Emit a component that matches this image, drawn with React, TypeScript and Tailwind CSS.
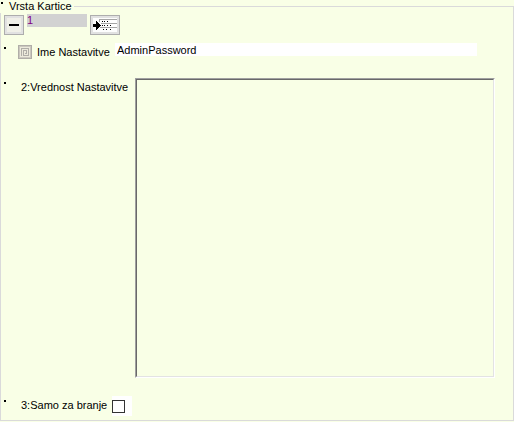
function Bullet() {
  return <span aria-hidden="true" className="h-[2px] w-[2px] shrink-0 bg-black" />;
}

function MinusIcon() {
  return (
    <svg width="14" height="14" viewBox="0 0 14 14" shapeRendering="crispEdges" aria-hidden="true">
      <rect x="2" y="6" width="10" height="2" fill="#000" />
    </svg>
  );
}

function InsertRowIcon() {
  return (
    <svg width="24" height="14" viewBox="0 0 24 14" shapeRendering="crispEdges" aria-hidden="true">
      <rect width="24" height="14" fill="#fdfdfd" />
      <path d="M6 1h18v1H6zM8 5h16v1H8zM7 9h17v1H7zM6 1h1v3H6z" fill="#a5a5a5" />
      <path
        d="M9 3h1v1H9zM11 3h1v1h-1zM14 3h1v1h-1zM9 7h1v1H9zM11 7h1v1h-1zM14 7h1v1h-1zM17 7h1v1h-1zM10 11h1v1h-1zM13 11h1v1h-1zM17 11h1v1h-1z"
        fill="#000"
      />
      <path d="M0 6h3V3h1v1h1v1h1v1h1v1h1v1H7v1H6v1H5v1H4v1H3V9H0z" fill="#000" />
    </svg>
  );
}

function SpiralIcon() {
  return (
    <svg width="14" height="14" viewBox="0 0 14 14" shapeRendering="crispEdges" aria-hidden="true">
      <rect width="14" height="14" fill="#eceadc" />
      <rect x="0.5" y="0.5" width="13" height="13" fill="none" stroke="#b0aea8" />
      <rect x="1.5" y="1.5" width="11" height="11" fill="none" stroke="#cbc8bf" />
      <path d="M3.5 11V3.5h7v7h-5v-5h3v3H7" fill="none" stroke="#b0aea8" />
    </svg>
  );
}

export default function App() {
  return (
    <main className="whitespace-nowrap bg-[#f9ffe6] pb-px font-['Liberation_Sans',Arial,sans-serif] text-[11px] leading-[13px] text-black">
      <fieldset className="min-w-0 border border-[#dadada]">
        <legend className="-ml-px flex h-[13px] gap-[6px] bg-[#f9ffe6] pl-px pr-[2px]">
          <span className="flex pt-[2px]">
            <Bullet />
          </span>
          Vrsta Kartice
        </legend>

        <div className="flex items-start gap-[3px] pl-[3px] pt-px">
          <button
            type="button"
            aria-label="Odstrani"
            className="mt-px flex h-5 w-5 items-center justify-center border border-[#adadad] bg-[#e1e1e1]"
          >
            <span className="flex h-[14px] w-[14px] bg-[#f0f0e8]">
              <MinusIcon />
            </span>
          </button>
          <input
            aria-label="Vrstica"
            defaultValue="1"
            className="h-[13px] w-[60px] bg-[#d2d2d2] text-[#800080] outline-none"
          />
          <button
            type="button"
            aria-label="Vstavi vrstico"
            className="mt-px flex h-5 w-[30px] items-center justify-center border border-[#adadad] bg-[#e1e1e1]"
          >
            <InsertRowIcon />
          </button>
        </div>

        <div className="mt-2 flex items-start pl-[3px] pr-9">
          <span className="flex w-[14px] pt-1">
            <Bullet />
          </span>
          <span className="w-[19px] pt-[2px]">
            <SpiralIcon />
          </span>
          <label htmlFor="ime" className="w-[78px] shrink-0 pt-[3px]">
            Ime Nastavitve
          </label>
          <input
            id="ime"
            defaultValue="AdminPassword"
            className="h-[13px] min-w-0 flex-1 bg-white px-[2px] pt-px outline-none"
          />
        </div>

        <div className="mt-[19px] flex items-start pl-[3px] pr-[18px]">
          <span className="flex w-[17px] pt-1">
            <Bullet />
          </span>
          <label htmlFor="vrednost" className="w-[114px] shrink-0 pt-[3px]">
            2:Vrednost Nastavitve
          </label>
          <div className="flex h-[300px] min-w-0 flex-1 border border-b-white border-l-[#a0a0a0] border-r-white border-t-[#a0a0a0]">
            <textarea
              id="vrednost"
              className="min-w-0 flex-1 resize-none border border-b-[#e3e3e3] border-l-[#696969] border-r-[#e3e3e3] border-t-[#696969] bg-transparent outline-none"
            />
          </div>
        </div>

        <div className="mt-[18px] flex items-start pb-1 pl-[3px]">
          <span className="flex w-[17px] pt-1">
            <Bullet />
          </span>
          <label htmlFor="branje" className="w-[91px] pt-[3px]">
            3:Samo za branje
          </label>
          <span className="flex h-5 w-5 items-center bg-white">
            <input
              id="branje"
              type="checkbox"
              className="h-[13px] w-[13px] appearance-none border border-[#333333] bg-white checked:bg-[#333333]"
            />
          </span>
        </div>
      </fieldset>
      <div className="h-0" />
    </main>
  );
}
